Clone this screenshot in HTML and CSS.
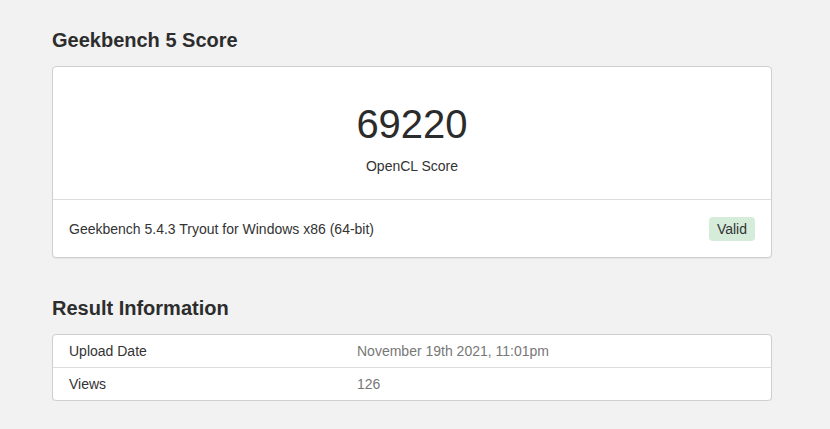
FILE: index.html
```html
<!DOCTYPE html>
<html>
<head>
<meta charset="utf-8">
<link rel="stylesheet" href="styles.css">
</head>
<body>
<div class="container">
  <h2 class="heading">Geekbench 5 Score</h2>
  <div class="card">
    <div class="score-box">
      <div class="score">69220</div>
      <div class="score-label">OpenCL Score</div>
    </div>
    <div class="card-footer">
      <span>Geekbench 5.4.3 Tryout for Windows x86 (64-bit)</span>
      <span class="badge">Valid</span>
    </div>
  </div>
  <h2 class="heading heading-second">Result Information</h2>
  <div class="table">
    <div class="row">
      <div class="label">Upload Date</div>
      <div class="value">November 19th 2021, 11:01pm</div>
    </div>
    <div class="row">
      <div class="label">Views</div>
      <div class="value">126</div>
    </div>
  </div>
</div>
</body>
</html>
```
FILE: styles.css
```css
html, body {
  margin: 0;
  padding: 0;
}
body {
  background: #f2f2f2;
  font-family: "Liberation Sans", Arial, sans-serif;
  color: #333;
  font-size: 14px;
}
.container {
  width: 720px;
  margin-left: 52px;
  padding-top: 29px;
}
.heading {
  margin: 0 0 15px 0;
  font-size: 20px;
  line-height: 22px;
  font-weight: bold;
  color: #2d2d2d;
}
.heading-second {
  margin-top: 39px;
  margin-bottom: 15px;
}
.card {
  background: #fff;
  border: 1px solid #cfcfcf;
  border-radius: 4px;
  box-shadow: 0 1px 1px rgba(0,0,0,0.05);
}
.score-box {
  height: 132px;
  display: flex;
  flex-direction: column;
  align-items: center;
  border-bottom: 1px solid #ddd;
}
.score {
  font-size: 40px;
  line-height: 46px;
  margin-top: 34px;
  color: #2b2b2b;
}
.score-label {
  margin-top: 11px;
  font-size: 14px;
  line-height: 16px;
}
.card-footer {
  height: 57px;
  display: flex;
  align-items: center;
  justify-content: space-between;
  padding: 0 16px;
}
.badge {
  background: #d5ecdb;
  color: #333;
  border-radius: 4px;
  padding: 0 8px;
  height: 24px;
  line-height: 24px;
  font-size: 14px;
}
.table {
  background: #fff;
  border: 1px solid #cfcfcf;
  border-radius: 4px;
  box-shadow: 0 1px 1px rgba(0,0,0,0.05);
}
.row {
  display: flex;
  height: 32px;
  align-items: center;
  padding: 0 16px;
}
.row + .row {
  border-top: 1px solid #ddd;
}
.label {
  width: 288px;
}
.value {
  color: #777;
}
```
